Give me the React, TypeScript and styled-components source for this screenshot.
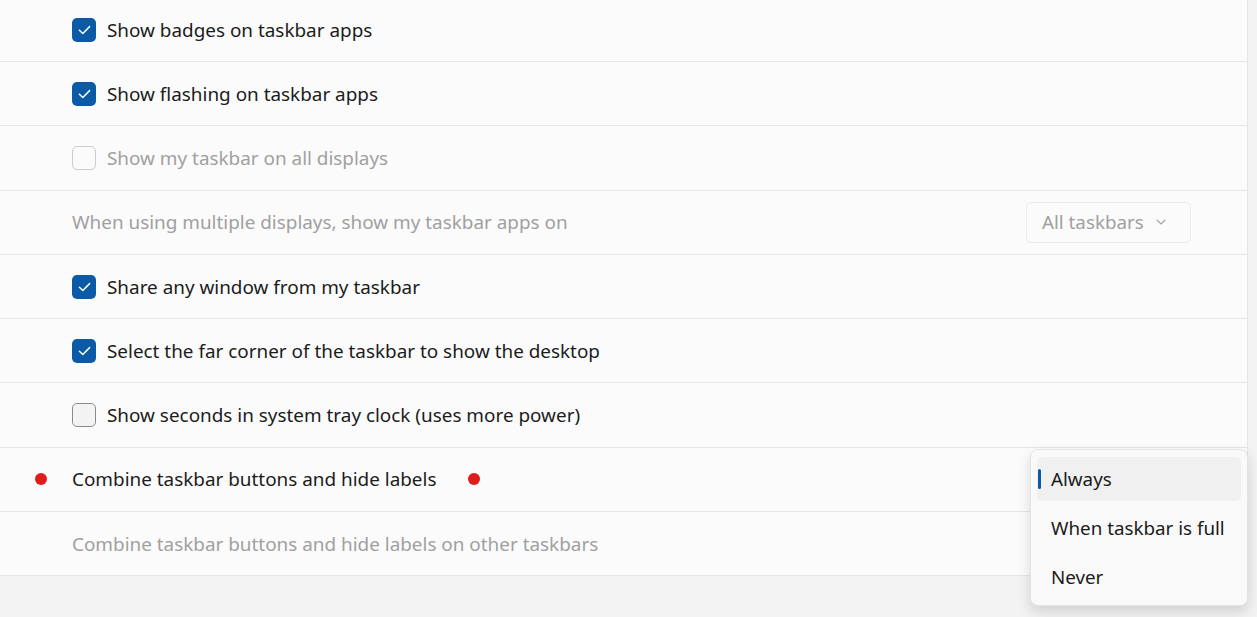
import styled, { createGlobalStyle } from "styled-components";

const GlobalStyle = createGlobalStyle`
    html, body {
        margin: 0;
        padding: 0;
        background: #f3f3f3;
        font-family: "Noto Sans", "Open Sans", sans-serif;
        overflow: hidden;
    }
`;

type CheckState = "checked" | "unchecked" | "disabled";

type RowData =
    | { kind: "check"; label: string; state: CheckState }
    | { kind: "select"; label: string; value: string; disabled?: boolean }
    | { kind: "combine"; label: string }
    | { kind: "text"; label: string; disabled?: boolean };

const ROWS: RowData[] = [
    { kind: "check", label: "Show badges on taskbar apps", state: "checked" },
    { kind: "check", label: "Show flashing on taskbar apps", state: "checked" },
    { kind: "check", label: "Show my taskbar on all displays", state: "disabled" },
    { kind: "select", label: "When using multiple displays, show my taskbar apps on", value: "All taskbars", disabled: true },
    { kind: "check", label: "Share any window from my taskbar", state: "checked" },
    { kind: "check", label: "Select the far corner of the taskbar to show the desktop", state: "checked" },
    { kind: "check", label: "Show seconds in system tray clock (uses more power)", state: "unchecked" },
    { kind: "combine", label: "Combine taskbar buttons and hide labels" },
    { kind: "text", label: "Combine taskbar buttons and hide labels on other taskbars", disabled: true },
];

const MENU_OPTIONS = ["Always", "When taskbar is full", "Never"];

const CheckMark = () => (
    <svg width="13" height="10" viewBox="0 0 13 10" fill="none">
        <path d="M1.4 5.3 L4.8 8.5 L11.6 1.6" stroke="#ffffff" strokeWidth="1.5" strokeLinecap="round" strokeLinejoin="round" />
    </svg>
);

const Chevron = () => (
    <svg width="10" height="6" viewBox="0 0 10 6" fill="none">
        <path d="M1 1 L5 5 L9 1" stroke="#a6a6a6" strokeWidth="1.1" strokeLinecap="round" strokeLinejoin="round" />
    </svg>
);

const App = () => {
    return (
        <Page>
            <GlobalStyle />
            <Panel>
                {ROWS.map((row, i) => (
                    <Row key={i} $first={i === 0}>
                        {row.kind === "check" ? (
                            <>
                                <Box $state={row.state}>{row.state === "checked" ? <CheckMark /> : null}</Box>
                                <Label $disabled={row.state === "disabled"}>{row.label}</Label>
                            </>
                        ) : null}
                        {row.kind === "select" ? (
                            <>
                                <Label $disabled={row.disabled}>{row.label}</Label>
                                <Spacer />
                                <SelectButton $disabled={row.disabled}>
                                    <span>{row.value}</span>
                                    <Chevron />
                                </SelectButton>
                            </>
                        ) : null}
                        {row.kind === "combine" ? (
                            <>
                                <MarkerDot $lead />
                                <Label>{row.label}</Label>
                                <MarkerDot />
                            </>
                        ) : null}
                        {row.kind === "text" ? <Label $disabled={row.disabled}>{row.label}</Label> : null}
                    </Row>
                ))}
            </Panel>
            <Flyout role="listbox">
                {MENU_OPTIONS.map((opt, i) => (
                    <FlyoutItem key={opt} $selected={i === 0} role="option" aria-selected={i === 0}>
                        {opt}
                    </FlyoutItem>
                ))}
            </Flyout>
        </Page>
    );
};

export default App;

const Page = styled.div`
    position: relative;
    width: 1257px;
    height: 617px;
    background: #f3f3f3;
    overflow: hidden;
`;

const Panel = styled.div`
    width: 1248px;
    display: flex;
    flex-direction: column;
    background: #fbfbfb;
    border-right: 1px solid #e5e5e5;
    border-bottom-left-radius: 4px;
    box-sizing: border-box;
`;

const Row = styled.div<{ $first?: boolean }>`
    position: relative;
    display: flex;
    align-items: center;
    height: ${(p) => (p.$first ? "62px" : "64.3px")};
    padding: ${(p) => (p.$first ? "0 56px 2px 72px" : "0 56px 0 72px")};
    border-bottom: 1px solid #e5e5e5;
    box-sizing: border-box;
`;

const Box = styled.span<{ $state: CheckState }>`
    width: 24px;
    height: 24px;
    margin-right: 11px;
    flex-shrink: 0;
    border-radius: 5px;
    display: flex;
    align-items: center;
    justify-content: center;
    box-sizing: border-box;
    background: ${(p) => (p.$state === "checked" ? "#0a5aa7" : p.$state === "unchecked" ? "#f3f3f3" : "transparent")};
    border: ${(p) =>
        p.$state === "checked" ? "none" : p.$state === "unchecked" ? "1px solid #8b8b8b" : "1px solid #cdcdcd"};
`;

const Label = styled.span<{ $disabled?: boolean }>`
    font-size: 18.9px;
    color: ${(p) => (p.$disabled ? "#a0a0a0" : "#1b1b1b")};
    white-space: nowrap;
`;

const Spacer = styled.div`
    flex: 1;
`;

const SelectButton = styled.div<{ $disabled?: boolean }>`
    display: flex;
    align-items: center;
    justify-content: space-between;
    width: 165px;
    height: 41px;
    padding: 0 24px 0 15px;
    box-sizing: border-box;
    border: 1px solid #ebebeb;
    border-radius: 5px;
    background: #fbfbfb;
    font-size: 18.8px;
    color: ${(p) => (p.$disabled ? "#a0a0a0" : "#1b1b1b")};
`;

const MarkerDot = styled.span<{ $lead?: boolean }>`
    width: 12px;
    height: 12px;
    border-radius: 50%;
    background: #e01b1b;
    ${(p) => (p.$lead ? "position: absolute; left: 35px; top: 50%; margin-top: -6px;" : "margin-left: 32px;")}
`;

const Flyout = styled.div`
    position: absolute;
    left: 1030px;
    top: 449px;
    width: 218px;
    padding: 7px 6px 6px;
    box-sizing: border-box;
    display: flex;
    flex-direction: column;
    background: #f9f9f9;
    border: 1px solid #e4e4e4;
    border-radius: 8px;
    box-shadow: 0 6px 14px rgba(0, 0, 0, 0.14);
`;

const FlyoutItem = styled.div<{ $selected?: boolean }>`
    position: relative;
    height: 44px;
    margin-bottom: 5px;
    display: flex;
    align-items: center;
    padding-left: 14px;
    border-radius: 5px;
    font-size: 18.8px;
    color: #1b1b1b;
    white-space: nowrap;
    background: ${(p) => (p.$selected ? "#f0f0f0" : "transparent")};

    &::before {
        content: "";
        display: ${(p) => (p.$selected ? "block" : "none")};
        position: absolute;
        left: 1px;
        top: 12px;
        width: 3px;
        height: 20px;
        border-radius: 2px;
        background: #0a5aa7;
    }

    &:last-child {
        margin-bottom: 0;
    }
`;
